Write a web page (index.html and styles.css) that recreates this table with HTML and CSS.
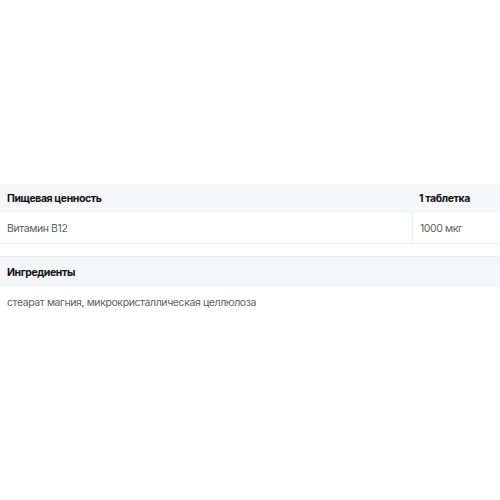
FILE: index.html
```html
<!DOCTYPE html>
<html lang="ru">
<head>
<meta charset="utf-8">
<link rel="stylesheet" href="styles.css">
</head>
<body>
<div class="page">
  <section class="nutrition">
    <div class="row head">
      <div class="cell name">Пищевая ценность</div>
      <div class="cell value">1 таблетка</div>
    </div>
    <div class="row body">
      <div class="cell name">Витамин B12</div>
      <div class="cell value">1000 мкг</div>
    </div>
  </section>
  <section class="ingredients">
    <div class="ing-head">Ингредиенты</div>
    <div class="ing-body">стеарат магния, микрокристаллическая целлюлоза</div>
  </section>
</div>
</body>
</html>
```
FILE: styles.css
```css
html, body {
  margin: 0;
  padding: 0;
  background: #fff;
}
body {
  font-family: Inter, "Noto Sans", sans-serif;
  font-size: 10.5px;
  letter-spacing: -0.4px;
  color: #1a1a1a;
}
.page {
  padding-top: 184px;
}
.row {
  display: grid;
  grid-template-columns: 412px 1fr;
}
.row.head {
  background: #f5f6f7;
  height: 29px;
  font-weight: 700;
  color: #111;
}
.row.body {
  height: 30px;
  border-bottom: 1px solid #eceef0;
  color: #5f5f5f;
}
.cell {
  display: flex;
  align-items: center;
  padding: 0 7px;
}
.row.body .value {
  border-left: 1px solid #f0f1f3;
}
.ingredients {
  margin-top: 12px;
  border-top: 1px solid #eceef0;
}
.ing-head {
  background: #f5f6f7;
  height: 30px;
  display: flex;
  align-items: center;
  padding: 0 7px;
  font-weight: 700;
  color: #111;
}
.ing-body {
  height: 30px;
  display: flex;
  align-items: center;
  padding: 0 7px;
  color: #5f5f5f;
}
```
